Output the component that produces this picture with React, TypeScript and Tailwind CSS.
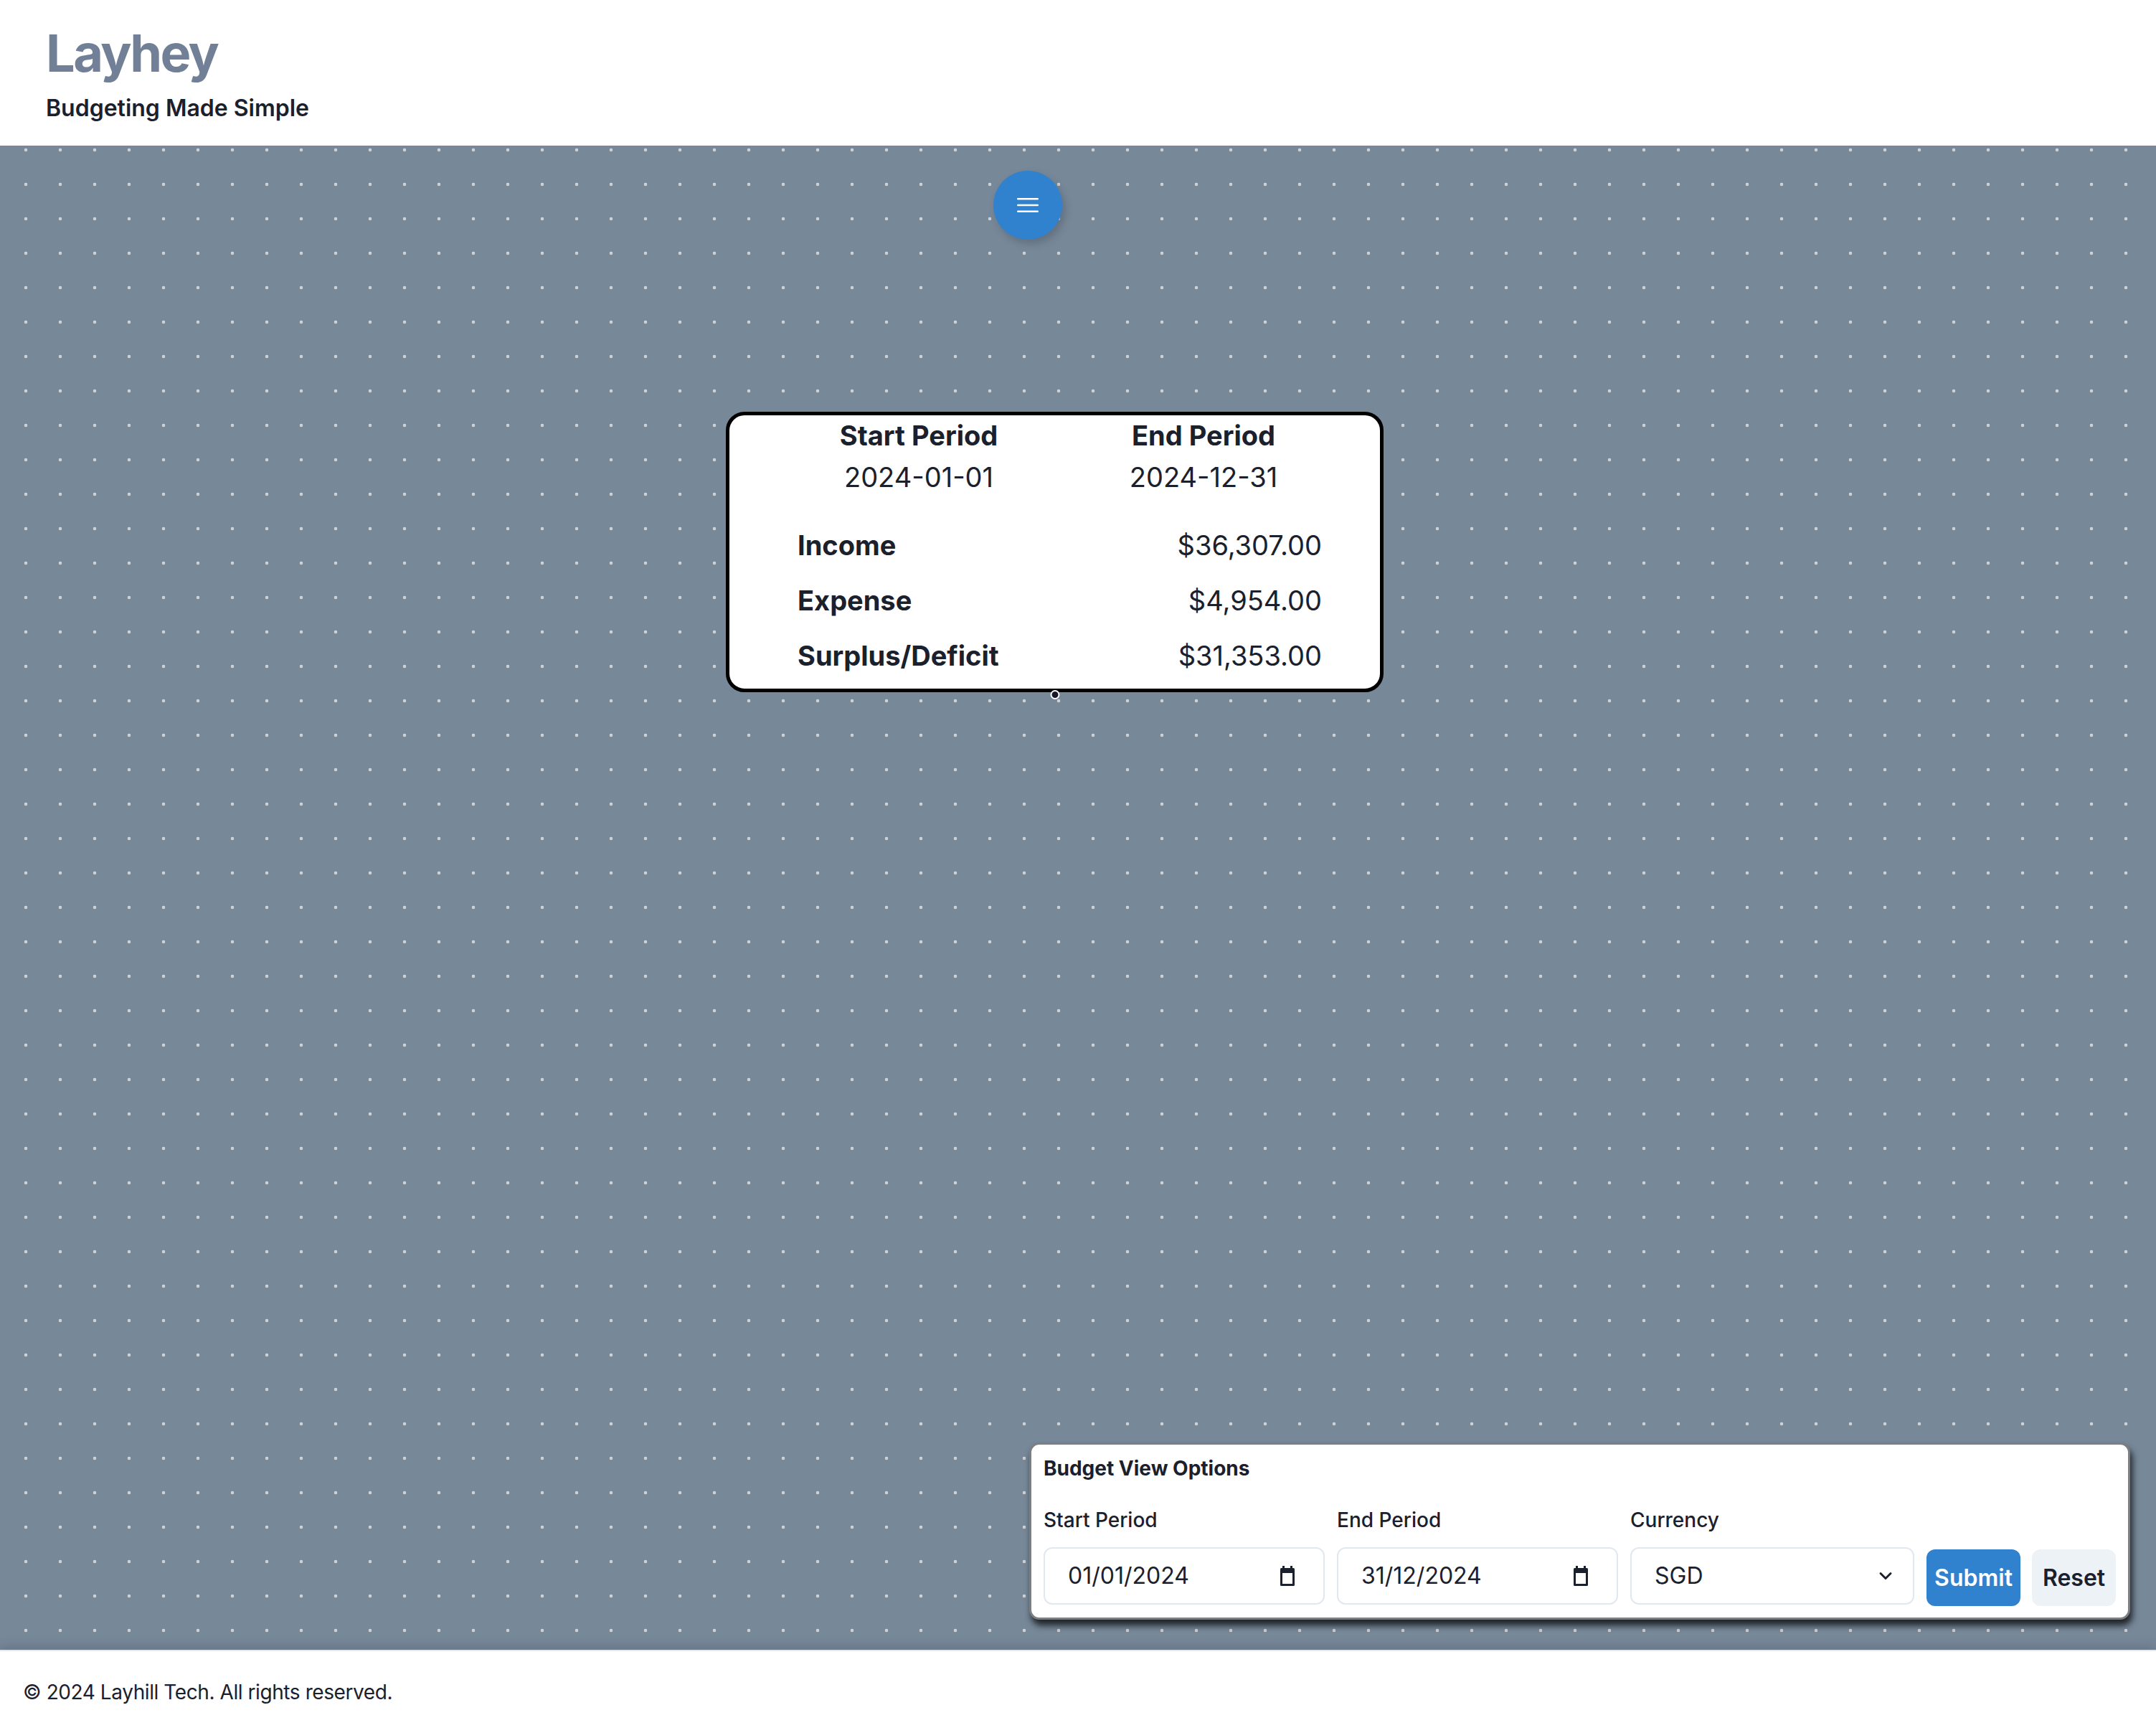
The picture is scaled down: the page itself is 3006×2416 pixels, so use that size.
import { ChevronDown } from 'lucide-react';

function CalendarIcon() {
  return (
    <svg width="24" height="28" viewBox="0 0 24 28" className="shrink-0">
      <rect x="5" y="0" width="3" height="5" fill="#1a202c" />
      <rect x="16" y="0" width="3" height="5" fill="#1a202c" />
      <rect x="2" y="3" width="20" height="25" rx="1.5" fill="#1a202c" />
      <rect x="5" y="10" width="14" height="15" fill="#ffffff" />
    </svg>
  );
}

function MenuIcon() {
  return (
    <svg width="32" height="22" viewBox="0 0 32 22">
      <rect x="1" y="1" width="30" height="2.6" rx="1.3" fill="#ffffff" />
      <rect x="1" y="9.7" width="30" height="2.6" rx="1.3" fill="#ffffff" />
      <rect x="1" y="18.4" width="30" height="2.6" rx="1.3" fill="#ffffff" />
    </svg>
  );
}

function SummaryNode() {
  const rows = [
    { label: 'Income', value: '$36,307.00' },
    { label: 'Expense', value: '$4,954.00' },
    { label: 'Surplus/Deficit', value: '$31,353.00' },
  ];
  return (
    <div className="absolute left-[1012px] top-[371px] h-[391px] w-[917px] rounded-[26px] border-[5px] border-black bg-white text-[38px] text-[#1a202c]">
      <div className="ml-[114px] mt-[4px] grid grid-cols-[300px_300px] gap-x-[97px] text-center">
        <div className="font-bold leading-[48px]">Start Period</div>
        <div className="font-bold leading-[48px]">End Period</div>
        <div className="mt-[10px] leading-[48px]">2024-01-01</div>
        <div className="mt-[10px] leading-[48px]">2024-12-31</div>
      </div>
      <div className="mt-[33px] pl-[95px] pr-[81px]">
        {rows.map((r) => (
          <div key={r.label} className="flex h-[77px] items-center justify-between leading-[77px]">
            <span className="font-bold">{r.label}</span>
            <span>{r.value}</span>
          </div>
        ))}
      </div>
      <div className="absolute bottom-[-15px] left-1/2 h-[13px] w-[13px] -translate-x-1/2 rounded-full border-2 border-white bg-[#1a192b]" />
    </div>
  );
}

function Field({ label, width, children }: { label: string; width: string; children: React.ReactNode }) {
  return (
    <div className={`flex flex-col ${width}`}>
      <div className="text-[28px] font-medium leading-[42px]">{label}</div>
      <div className="mt-[17px] flex h-[80px] items-center justify-between rounded-[12px] border-2 border-[#e2e8f0] pl-[32px] pr-[38px] text-[32px]">
        {children}
      </div>
    </div>
  );
}

function OptionsPanel() {
  return (
    <div className="absolute bottom-[42px] right-[36px] w-[1535px] rounded-[14px] border-[3px] border-[#7b7f84] bg-white px-[17px] pb-[18px] pt-[12px] text-[#1a202c] shadow-[3px_8px_10px_rgba(0,0,0,0.75)]">
      <div className="text-[28px] font-bold leading-[42px]">Budget View Options</div>
      <div className="mt-[30px] flex items-end">
        <Field label="Start Period" width="w-[392px]">
          <span>01/01/2024</span>
          <CalendarIcon />
        </Field>
        <div className="w-[17px]" />
        <Field label="End Period" width="w-[392px]">
          <span>31/12/2024</span>
          <CalendarIcon />
        </Field>
        <div className="w-[17px]" />
        <Field label="Currency" width="w-[396px]">
          <span>SGD</span>
          <ChevronDown size={28} strokeWidth={2.5} className="-mr-[14px]" />
        </Field>
        <button className="mb-[-2px] ml-[17px] h-[79px] w-[131px] rounded-[12px] bg-[#3182ce] text-[32px] font-semibold text-white">
          Submit
        </button>
        <button className="mb-[-2px] ml-[16px] h-[79px] w-[117px] rounded-[12px] bg-[#edf2f7] text-[32px] font-semibold text-[#1a202c]">
          Reset
        </button>
      </div>
    </div>
  );
}

export default function App() {
  return (
    <div className="flex h-[2416px] w-[3006px] flex-col bg-white font-['Inter','Noto_Sans',sans-serif] text-[#1a202c]">
      <header className="h-[203px] shrink-0 pl-[64px] pt-[31px]">
        <h1 className="text-[72px] font-bold leading-[86px] tracking-[-0.035em] text-[#718096]">Layhey</h1>
        <p className="mt-[10px] text-[32px] font-semibold leading-[48px]">Budgeting Made Simple</p>
      </header>

      <main className="relative flex-1 overflow-hidden bg-[#778899] bg-[radial-gradient(circle,#cdd1d6_2px,transparent_2.6px)] bg-[length:48px_48px] bg-[position:12px_30px]">
        <button className="absolute left-[1385px] top-[35px] flex h-[96px] w-[96px] items-center justify-center rounded-full bg-[#3182ce] shadow-[4px_6px_12px_rgba(0,0,0,0.18)]">
          <MenuIcon />
        </button>
        <SummaryNode />
        <OptionsPanel />
      </main>

      <footer className="relative z-10 flex h-[116px] shrink-0 items-center border-t-2 border-[#e2e8f0] pl-[32px] text-[28px] tracking-[-0.015em] shadow-[0_-6px_14px_rgba(0,0,0,0.12)]">
        © 2024 Layhill Tech. All rights reserved.
      </footer>
    </div>
  );
}
